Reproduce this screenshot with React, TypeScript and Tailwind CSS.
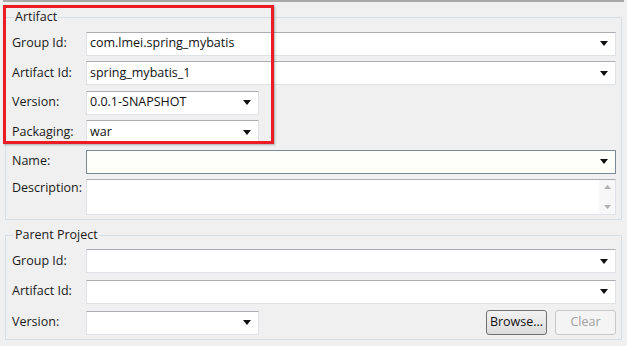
import React from "react";

const font = { fontFamily: '"Open Sans", "Noto Sans", Arial, sans-serif' };

function Arrow() {
  return (
    <svg width="8" height="5" viewBox="0 0 8 5" className="shrink-0">
      <path d="M0 0 H8 L4 5 Z" fill="#111" />
    </svg>
  );
}

function Combo({ value, wide = true, focused = false }: { value?: string; wide?: boolean; focused?: boolean }) {
  return (
    <div
      className={`flex h-6 items-center border pl-[3px] pr-[7px] ${wide ? "flex-1" : "w-[173px]"} ${
        focused ? "border-[#7a8a99] bg-[#fffffa]" : "border-[#dfe3e8] border-t-[#abadb3] bg-white"
      }`}
    >
      <span className="flex-1 truncate text-[12.5px] text-[#111]">{value}</span>
      <Arrow />
    </div>
  );
}

function Row({ label, children }: { label: string; children: React.ReactNode }) {
  return (
    <div className="flex items-center">
      <span className="w-[74px] text-[12.5px] text-[#1a1a1a]">{label}</span>
      {children}
    </div>
  );
}

export default function App() {
  return (
    <div className="relative h-[346px] w-[627px] overflow-hidden bg-[#f0f0f0]" style={font}>
      <div className="mx-[3px] h-[2px] bg-[#a8a8a8]" />

      {/* Artifact group */}
      <fieldset className="mx-[5px] mt-[6px] border border-[#d5dfe5] pb-[4px] pl-[6px] pr-[5px]">
        <legend className="ml-[2px] px-[1px] text-[12.5px] text-[#1a1a1a]">Artifact</legend>
        <div className="flex flex-col gap-[5.5px] pt-[5px]">
          <Row label="Group Id:">
            <Combo value="com.lmei.spring_mybatis" />
          </Row>
          <Row label="Artifact Id:">
            <Combo value="spring_mybatis_1" />
          </Row>
          <Row label="Version:">
            <Combo value="0.0.1-SNAPSHOT" wide={false} />
          </Row>
          <Row label="Packaging:">
            <Combo value="war" wide={false} />
          </Row>
          <Row label="Name:">
            <Combo focused />
          </Row>
          <div className="flex items-start">
            <span className="w-[74px] text-[12.5px] text-[#1a1a1a]">Description:</span>
            <div className="flex h-[36px] flex-1 border border-[#dfe3e8] border-t-[#abadb3] bg-white">
              <div className="flex-1" />
              <div className="flex w-[16px] flex-col items-center justify-between bg-[#f7f7f7] py-[5px]">
                <svg width="7" height="4" viewBox="0 0 7 4">
                  <path d="M0 4 L3.5 0 L7 4 Z" fill="#b0b0b0" />
                </svg>
                <svg width="7" height="4" viewBox="0 0 7 4">
                  <path d="M0 0 H7 L3.5 4 Z" fill="#b0b0b0" />
                </svg>
              </div>
            </div>
          </div>
        </div>
      </fieldset>

      {/* Parent Project group */}
      <fieldset className="mx-[5px] mt-[6px] border border-[#d5dfe5] pb-[4px] pl-[6px] pr-[5px]">
        <legend className="ml-[2px] px-[1px] text-[12.5px] text-[#1a1a1a]">Parent Project</legend>
        <div className="flex flex-col gap-[6.5px] pt-[4px]">
          <Row label="Group Id:">
            <Combo />
          </Row>
          <Row label="Artifact Id:">
            <Combo />
          </Row>
          <Row label="Version:">
            <Combo wide={false} />
            <div className="flex-1" />
            <button className="h-[25px] w-[61px] rounded-[3px] border border-[#707070] bg-gradient-to-b from-[#f2f2f2] to-[#dcdcdc] text-[12.5px] text-[#111]">
              Browse...
            </button>
            <button className="ml-[8px] h-[25px] w-[61px] rounded-[3px] border border-[#c8c8c8] bg-[#f4f4f4] text-[12.5px] text-[#a0a0a0]">
              Clear
            </button>
          </Row>
        </div>
      </fieldset>

      {/* red highlight */}
      <div className="absolute left-[3px] top-[5px] h-[139px] w-[271px] border-[3px] border-[#ec1c24] shadow-[1px_1px_2px_rgba(0,0,0,0.3)]" />
    </div>
  );
}
